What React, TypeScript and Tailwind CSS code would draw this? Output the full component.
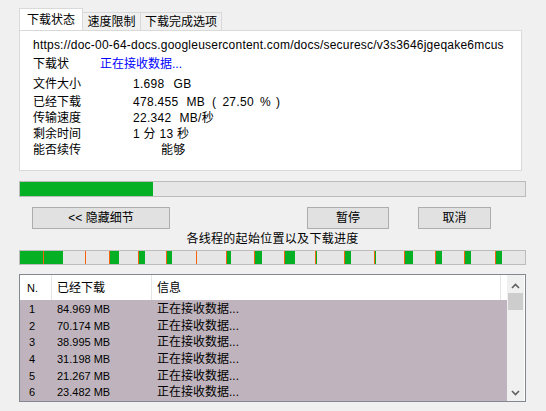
import React from 'react';

const font = { fontFamily: '"Liberation Sans", "Noto Sans CJK SC", sans-serif' };

// thread segments: start x and end x of downloaded part, measured from the bar's inner left
const threads: [number, number][] = [
  [0, 23], [23, 43], [65, 65], [89, 99], [118, 125], [146, 152], [176, 177],
  [206, 211], [234, 242], [264, 275], [295, 297], [324, 331], [354, 356],
  [384, 393], [415, 422], [444, 451], [475, 482],
];

const rows = [
  ['1', '84.969 MB'],
  ['2', '70.174 MB'],
  ['3', '38.995 MB'],
  ['4', '31.198 MB'],
  ['5', '21.267 MB'],
  ['6', '23.482 MB'],
];

function Info({ label, children, className = '' }: { label: string; children: React.ReactNode; className?: string }) {
  return (
    <div className={`flex h-4 items-center ${className}`}>
      <span className="w-[100px]">{label}</span>
      <span className="flex items-center tracking-[0.3px]">{children}</span>
    </div>
  );
}

function Button({ children, className }: { children: React.ReactNode; className: string }) {
  return (
    <div
      className={`flex h-[22px] items-center justify-center border border-[#adadad] bg-[#e1e1e1] text-[12px] text-black ${className}`}
    >
      {children}
    </div>
  );
}

export default function App() {
  return (
    <div className="h-[411px] w-[546px] overflow-hidden bg-[#f0f0f0] text-[12px] leading-4 text-black" style={font}>
      {/* Tabs */}
      <div className="ml-[19px] mt-[8px] flex items-end">
        <div className="relative z-10 flex h-[22px] w-[64px] items-start justify-center border border-b-0 border-[#d9d9d9] bg-white pt-[3px] text-[12px]">
          下载状态
        </div>
        <div className="flex h-[18px] w-[58px] items-center justify-center border border-b-0 border-l-0 border-[#d9d9d9] bg-[#f0f0f0]">
          速度限制
        </div>
        <div className="flex h-[18px] w-[81px] items-center justify-center border border-b-0 border-l-0 border-[#d9d9d9] bg-[#f0f0f0]">
          下载完成选项
        </div>
      </div>

      {/* Status panel */}
      <div className="ml-[19px] h-[141px] w-[503px] border border-[#d9d9d9] bg-white pl-[13px] pt-[6px]">
        <div className="h-4 whitespace-nowrap tracking-[0.22px]">
          https://doc-00-64-docs.googleusercontent.com/docs/securesc/v3s3646jgeqake6mcus
        </div>
        <div className="mt-[3px] flex h-4 items-center">
          <span className="w-[67px]">下载状</span>
          <span className="text-[#0000ff]">正在接收数据...</span>
        </div>
        <div className="mt-[4px]">
          <Info label="文件大小" className="mb-[2px]">
            <span>1.698</span>
            <span className="ml-[9px]">GB</span>
          </Info>
          <Info label="已经下载">
            <span>478.455</span>
            <span className="ml-[8px]">MB</span>
            <span className="ml-[7px]">(</span>
            <span className="ml-[6px]">27.50</span>
            <span className="ml-[6px]">%</span>
            <span className="ml-[5px]">)</span>
          </Info>
          <Info label="传输速度">
            <span>22.342</span>
            <span className="ml-[8px]">MB/秒</span>
          </Info>
          <Info label="剩余时间">1 分 13 秒</Info>
          <Info label="能否续传">
            <span className="pl-[28px]">能够</span>
          </Info>
        </div>
      </div>

      {/* Overall progress */}
      <div className="ml-[19px] mt-[10px] h-[16px] w-[507px] border border-[#bcbcbc] bg-[#e6e6e6]">
        <div className="h-full w-[133px] bg-[#06b025]" />
      </div>

      {/* Buttons */}
      <div className="mt-[10px] flex">
        <Button className="ml-[32px] w-[138px]">&lt;&lt; 隐藏细节</Button>
        <Button className="ml-[137px] w-[82px]">暂停</Button>
        <Button className="ml-[29px] w-[73px]">取消</Button>
      </div>

      <div className="ml-[19px] mt-[2px] h-4 w-[507px] text-center tracking-[0.3px]">各线程的起始位置以及下载进度</div>

      {/* Per-thread progress */}
      <div className="relative ml-[19px] mt-[3px] h-[15px] w-[507px] border border-[#bcbcbc] bg-[#e6e6e6]">
        {threads.map(([s, e], i) => (
          <React.Fragment key={i}>
            <div className="absolute top-0 h-full bg-[#06b025]" style={{ left: s, width: e - s }} />
            {s > 0 && <div className="absolute top-0 h-full w-px bg-[#f7630c]" style={{ left: s }} />}
          </React.Fragment>
        ))}
      </div>

      {/* Thread table */}
      <div className="ml-[19px] mt-[9px] flex h-[128px] w-[507px] border border-[#828790] bg-white">
        <div className="flex w-[487px] flex-col">
          <div className="flex h-[25px] w-[481px] items-center border-r border-[#e5e5e5] bg-white">
            <span className="w-[31px] pl-[7px] text-[11px]">N.</span>
            <span className="h-full w-px bg-[#e5e5e5]" />
            <span className="w-[99px] pl-[5px]">已经下载</span>
            <span className="h-full w-px bg-[#e5e5e5]" />
            <span className="pl-[5px]">信息</span>
          </div>
          <div className="flex-1 bg-[#bfb4bd] pt-[1px]">
            {rows.map(([n, mb]) => (
              <div key={n} className="flex h-[16.6px] items-center">
                <span className="w-[31px] pl-[9px] text-[11px]">{n}</span>
                <span className="w-[100px] pl-[6px] text-[11px]">{mb}</span>
                <span className="pl-[6px]">正在接收数据...</span>
              </div>
            ))}
          </div>
        </div>
        <div className="flex w-[17px] flex-col items-center bg-[#f0f0f0]">
          <svg width="9" height="6" viewBox="0 0 9 6" className="mt-[8px]">
            <path d="M1 5 L4.5 1.5 L8 5" stroke="#606060" strokeWidth="1.6" fill="none" />
          </svg>
          <div className="mt-[4px] h-[17px] w-[15px] bg-[#cdcdcd]" />
          <div className="flex-1" />
          <svg width="9" height="6" viewBox="0 0 9 6" className="mb-[5px]">
            <path d="M1 1 L4.5 4.5 L8 1" stroke="#606060" strokeWidth="1.6" fill="none" />
          </svg>
        </div>
      </div>
    </div>
  );
}
